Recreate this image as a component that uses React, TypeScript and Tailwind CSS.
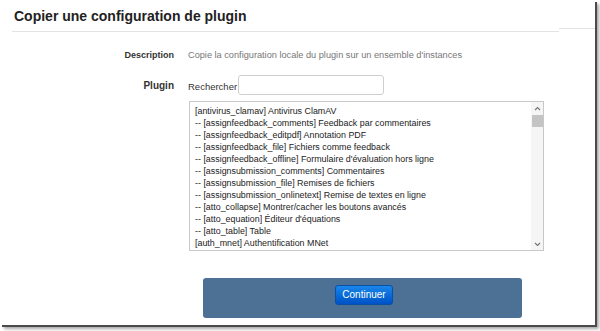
import React from "react";

const items: string[] = [
  "[antivirus_clamav] Antivirus ClamAV",
  "-- [assignfeedback_comments] Feedback par commentaires",
  "-- [assignfeedback_editpdf] Annotation PDF",
  "-- [assignfeedback_file] Fichiers comme feedback",
  "-- [assignfeedback_offline] Formulaire d'évaluation hors ligne",
  "-- [assignsubmission_comments] Commentaires",
  "-- [assignsubmission_file] Remises de fichiers",
  "-- [assignsubmission_onlinetext] Remise de textes en ligne",
  "-- [atto_collapse] Montrer/cacher les boutons avancés",
  "-- [atto_equation] Éditeur d'équations",
  "-- [atto_table] Table",
  "[auth_mnet] Authentification MNet",
  "[block_activity_modules] Activités",
];

export default function App() {
  return (
    <div
      className="w-[600px] h-[331px] bg-white overflow-hidden"
      style={{ fontFamily: '"Liberation Sans", Arial, sans-serif' }}
    >
      <div className="w-[595px] h-[325px] bg-white shadow-[2px_2px_0_#4a4a4a,4px_4px_3px_rgba(0,0,0,0.35)] flex flex-col">
        {/* Header */}
        <div className="flex items-start h-[33px]">
          <div className="w-[559px] h-[32px] flex flex-col">
            <div className="pl-[14px] pt-[8px] h-[31px] text-[14px] leading-[16px] font-bold text-[#222]">
              Copier une configuration de plugin
            </div>
            <div className="ml-[12px] h-px bg-[#e3e3e3]" />
          </div>
          <div className="flex-1 h-[29px] border-b border-[#e3e3e3]" />
        </div>

        {/* Description row */}
        <div className="flex items-center mt-[16px] h-[14px]">
          <div className="w-[174px] text-right text-[9px] font-bold text-[#333]">Description</div>
          <div className="ml-[14px] text-[9.2px] text-[#777]">
            Copie la configuration locale du plugin sur un ensemble d'instances
          </div>
        </div>

        {/* Plugin row */}
        <div className="flex mt-[12px]">
          <div className="w-[174px] text-right text-[10px] font-bold text-[#333] pt-[3px]">Plugin</div>
          <div className="ml-[14px] flex flex-col">
            <div className="flex items-center h-[20px]">
              <span className="text-[9.5px] text-[#333] pt-[4px]">Rechercher</span>
              <div className="ml-px w-[146px] h-[20px] border border-[#cfcfcf] rounded-[3px] bg-white" />
            </div>
            <div className="mt-[6px] ml-px w-[355px] h-[150px] border border-[#c8c8c8] bg-white flex">
              <div className="flex-1 overflow-hidden pl-[5px] pt-[3px]">
                {items.map((t, i) => (
                  <div key={i} className="text-[8.9px] leading-[12px] text-[#222] whitespace-nowrap">
                    {t}
                  </div>
                ))}
              </div>
              <div className="w-[12px] flex flex-col items-center bg-[#f5f5f5]">
                <svg width="7" height="5" viewBox="0 0 7 5" className="mt-[4px]">
                  <path d="M1 4 L3.5 1.5 L6 4" fill="none" stroke="#777" strokeWidth="1.2" />
                </svg>
                <div className="mt-[4px] w-[11px] h-[12px] bg-[#c4c4c4]" />
                <div className="flex-1" />
                <svg width="7" height="5" viewBox="0 0 7 5" className="mb-[3px]">
                  <path d="M1 1 L3.5 3.5 L6 1" fill="none" stroke="#777" strokeWidth="1.2" />
                </svg>
              </div>
            </div>
          </div>
        </div>

        {/* Button panel */}
        <div className="mt-[27px] ml-[203px] w-[319px] h-[40px] bg-[#4c7195] rounded-[3px] flex justify-center pt-[7px]">
          <button className="ml-[3px] w-[58px] h-[20px] rounded-[3px] border border-[#0a4fa8] bg-gradient-to-b from-[#1a86ea] to-[#0052c6] text-white text-[10px] leading-[18px]">
            Continuer
          </button>
        </div>
      </div>
    </div>
  );
}
